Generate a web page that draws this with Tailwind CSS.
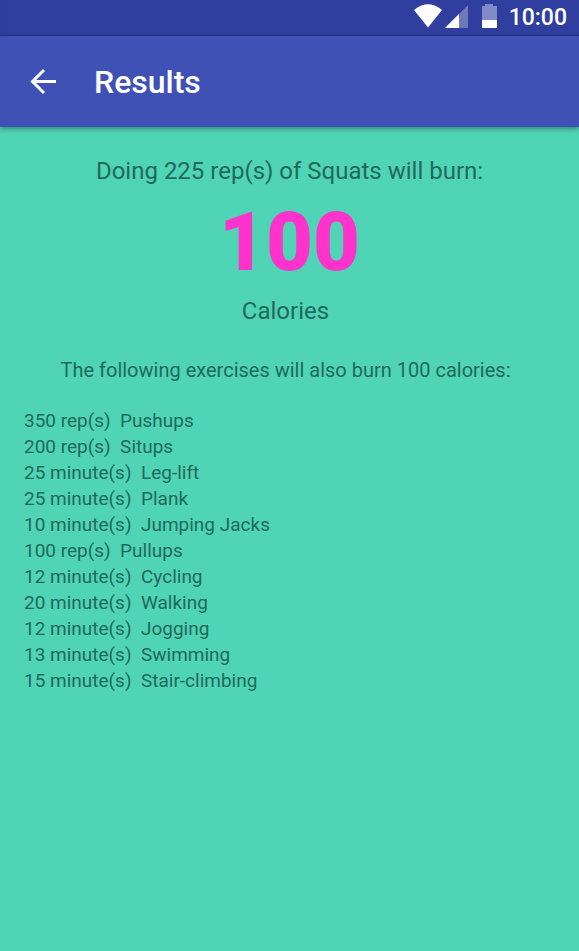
<!DOCTYPE html>
<html lang="en">
<head>
<meta charset="utf-8">
<meta name="viewport" content="width=device-width, initial-scale=1">
<title>Results</title>
<script src="https://cdn.jsdelivr.net/npm/@tailwindcss/browser@4"></script>
</head>
<body class="flex min-h-screen flex-col bg-[#50d4b6] font-['Roboto',sans-serif] text-[#206a5b]">
  <div class="flex h-9 items-center justify-end bg-[#303f9f] pr-3 text-white shadow-[inset_0_-2px_2px_-1px_rgba(0,0,0,0.2)]">
    <svg class="h-8 w-[90px]" viewBox="0 0 90 32" fill="#fff" role="img" aria-label="Wi-Fi, signal and battery">
      <path d="M7 8Q21-3.500 35 8L21 25.500Z"/>
      <path d="M38 26L61 3V26Z" fill-opacity=".3"/>
      <path d="M38 26L52 12V26Z"/>
      <path d="M75 4H78V2H86V4H90V18H75Z" fill-opacity=".4"/>
      <path d="M75 18H90V26H75Z"/>
    </svg>
    <time class="ml-3 text-[23px] leading-8 font-medium">10:00</time>
  </div>
  <header class="z-10 flex h-[91px] items-center bg-[#3f51b5] pl-6 text-white shadow-[0_2px_5px_rgba(0,0,0,0.35)]">
    <button type="button" aria-label="Back" class="flex h-10 w-10 items-center justify-center">
      <svg class="h-10 w-10" viewBox="0 0 40 40" fill="none" stroke="#fff" stroke-width="3"><path d="M32 19.500H8.500M20 8L8.500 19.500L20 31"/></svg>
    </button>
    <h1 class="ml-[30px] text-[32px] leading-10 font-medium">Results</h1>
  </header>
  <main class="px-6 pt-7">
    <p class="text-center text-[24px] leading-8">Doing 225 rep(s) of Squats will burn:</p>
    <p class="mt-2 text-center text-[81px] leading-24 font-black text-[#ff33cc]">100</p>
    <p class="mt-1 pr-2 text-center text-[24px] leading-8">Calories</p>
    <h2 class="mt-[30px] pr-2 text-center text-[20px] leading-[26px]">The following exercises will also burn 100 calories:</h2>
    <ul class="mt-[25px] text-[19px] leading-[26px]">
      <li class="whitespace-pre">350 rep(s)  Pushups</li>
      <li class="whitespace-pre">200 rep(s)  Situps</li>
      <li class="whitespace-pre">25 minute(s)  Leg-lift</li>
      <li class="whitespace-pre">25 minute(s)  Plank</li>
      <li class="whitespace-pre">10 minute(s)  Jumping Jacks</li>
      <li class="whitespace-pre">100 rep(s)  Pullups</li>
      <li class="whitespace-pre">12 minute(s)  Cycling</li>
      <li class="whitespace-pre">20 minute(s)  Walking</li>
      <li class="whitespace-pre">12 minute(s)  Jogging</li>
      <li class="whitespace-pre">13 minute(s)  Swimming</li>
      <li class="whitespace-pre">15 minute(s)  Stair-climbing</li>
    </ul>
  </main>
</body>
</html>
